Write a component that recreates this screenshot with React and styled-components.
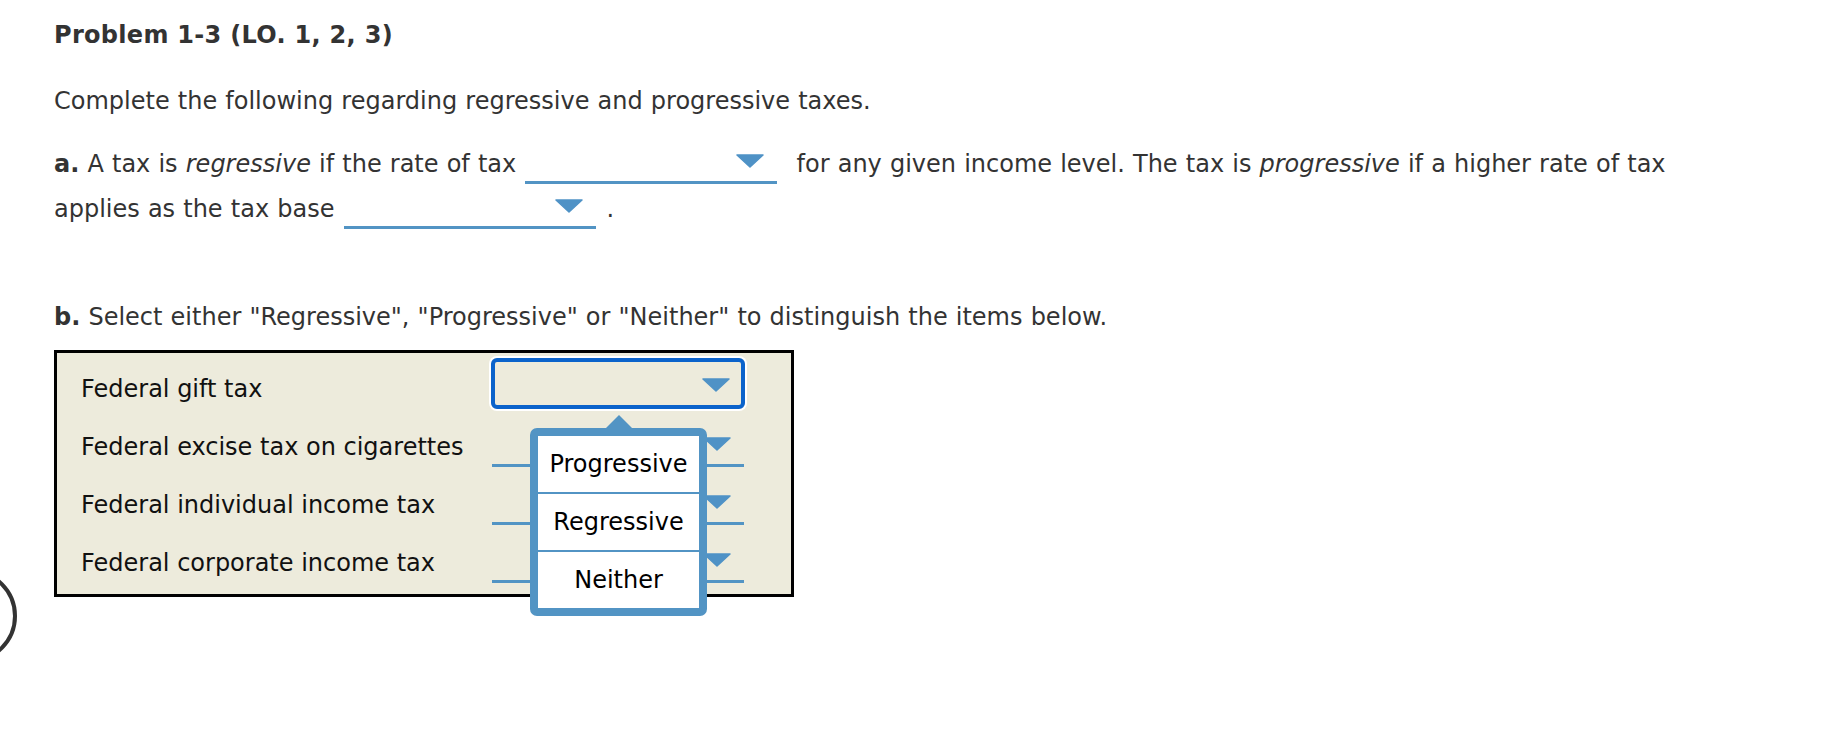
import React from "react";
import styled, { createGlobalStyle, css } from "styled-components";

const GlobalStyle = createGlobalStyle`
  html, body {
    margin: 0;
    padding: 0;
    background: #ffffff;
  }
  body {
    font-family: "DejaVu Sans", Verdana, "Noto Sans", sans-serif;
  }
`;

const Page = styled.div`
  position: relative;
  box-sizing: border-box;
  width: 1730px;
  min-height: 754px;
  padding: 20px 0 0 54px;
  color: #333333;
  font-size: 24px;
  word-spacing: 0.5px;
`;

const Title = styled.h1`
  margin: 0;
  font-size: 24px;
  font-weight: bold;
  line-height: 30px;
  letter-spacing: 0.3px;
  word-spacing: 0;
  color: #333333;
`;

const Intro = styled.p`
  margin: 36px 0 0;
  line-height: 30px;
`;

const PartA = styled.p`
  margin: 26px 0 0;
  line-height: 45px;
`;

const PartB = styled.p`
  margin: 70px 0 0;
  line-height: 30px;
`;

const InlineSelect = styled.span`
  display: inline-block;
  position: relative;
  box-sizing: border-box;
  width: 252px;
  height: 40px;
  border-bottom: 3px solid #5294c4;
  vertical-align: -12px;
  margin: 0 11px 0 1px;
`;

const ArrowIcon = styled.svg`
  position: absolute;
  right: ${(p) => p.$right}px;
  bottom: 13px;
  width: 28px;
  height: 14px;
  display: block;
`;

const Arrow = ({ right = 13 }) => (
  <ArrowIcon $right={right} viewBox="0 0 28 14">
    <polygon
      points="1,1 27,1 14,13"
      fill="#4f92c6"
      stroke="#4f92c6"
      strokeWidth="1.5"
      strokeLinejoin="round"
    />
  </ArrowIcon>
);

const Table = styled.div`
  margin-top: 18px;
  width: 740px;
  box-sizing: border-box;
  border: 3px solid #000000;
  background: #edebdc;
  display: grid;
  grid-template-columns: 410px 254px;
  row-gap: 7px;
  padding: 5px 0 11px 24px;
  position: relative;
  color: #111111;
  word-spacing: 0;
`;

const Label = styled.div`
  line-height: 30px;
  padding-top: 16px;
`;

const SelectCell = styled.div`
  position: relative;
  height: 51px;
`;

const TableSelect = styled.div`
  position: relative;
  box-sizing: border-box;
  height: 51px;
  ${(p) =>
    p.$focused
      ? css`
          border: 4px solid #0b63cb;
          border-radius: 6px;
          box-shadow: 0 0 0 2px #ffffff;
        `
      : css`
          margin: 0 1px;
          border-bottom: 3px solid #5294c4;
        `}
`;

const Popup = styled.div`
  position: absolute;
  left: 39px;
  top: 70px;
  z-index: 2;
  width: 177px;
  box-sizing: border-box;
  border: 8px solid #5294c4;
  border-radius: 7px;
  background: #ffffff;
  color: #000000;
  text-align: center;

  &::before {
    content: "";
    position: absolute;
    top: -21px;
    left: 50%;
    transform: translateX(-50%);
    width: 0;
    height: 0;
    border-left: 13px solid transparent;
    border-right: 13px solid transparent;
    border-bottom: 13px solid #5294c4;
  }
`;

const Option = styled.div`
  height: 56px;
  line-height: 56px;

  & + & {
    border-top: 2px solid #5294c4;
  }
`;

const Circle = styled.div`
  position: absolute;
  left: -77px;
  top: 569px;
  width: 94px;
  height: 94px;
  box-sizing: border-box;
  border: 4.5px solid #333333;
  border-radius: 50%;
`;

const rows = [
  "Federal gift tax",
  "Federal excise tax on cigarettes",
  "Federal individual income tax",
  "Federal corporate income tax",
];

export default function App() {
  return (
    <>
      <GlobalStyle />
      <Page>
        <Title>Problem 1-3 (LO. 1, 2, 3)</Title>
        <Intro>Complete the following regarding regressive and progressive taxes.</Intro>
        <PartA>
          <b>a.</b> A tax is <i>regressive</i> if the rate of tax{" "}
          <InlineSelect>
            <Arrow />
          </InlineSelect>{" "}
          for any given income level. The tax is <i>progressive</i> if a higher rate of tax
          applies as the tax base{" "}
          <InlineSelect>
            <Arrow />
          </InlineSelect>
          .
        </PartA>
        <PartB>
          <b>b.</b> Select either "Regressive", "Progressive" or "Neither" to distinguish the
          items below.
        </PartB>
        <Table>
          {rows.map((label, i) => (
            <React.Fragment key={label}>
              <Label>{label}</Label>
              <SelectCell>
                <TableSelect $focused={i === 0}>
                  <Arrow right={i === 0 ? 11 : 13} />
                </TableSelect>
                {i === 0 && (
                  <Popup>
                    <Option>Progressive</Option>
                    <Option>Regressive</Option>
                    <Option>Neither</Option>
                  </Popup>
                )}
              </SelectCell>
            </React.Fragment>
          ))}
        </Table>
        <Circle />
      </Page>
    </>
  );
}
